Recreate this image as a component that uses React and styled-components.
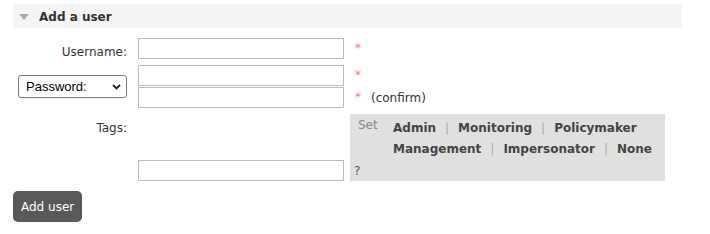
import React from "react";
import styled, { createGlobalStyle } from "styled-components";

const Global = createGlobalStyle`
  html, body { margin: 0; padding: 0; background: #fff; }
  body { font-family: "DejaVu Sans", Verdana, sans-serif; font-size: 12px; color: #333; }
  * { box-sizing: border-box; }
`;

const Page = styled.div`
  padding: 4px 28px 0 13px;
  width: 710px;
`;

const SectionHeader = styled.div`
  display: flex;
  align-items: center;
  height: 24px;
  background: #f5f5f5;
  padding: 1px 0 0 6px;
  font-weight: bold;
  color: #333;
  line-height: 14px;
`;

const Toggle = styled.svg`
  width: 10px;
  height: 6px;
  margin-right: 10px;
  display: block;
`;

const FormGrid = styled.div`
  display: grid;
  grid-template-columns: 125px 1fr;
  row-gap: 6px;
  margin-top: 10px;
`;

const Label = styled.div`
  text-align: right;
  padding-right: 11px;
  padding-top: ${(p) => p.$top || 0}px;
  line-height: 14px;
  color: #333;
`;

const LabelCell = styled.div`
  display: flex;
  align-items: center;
  justify-content: flex-end;
  padding-right: 11px;
`;

const Fields = styled.div`
  display: flex;
  flex-direction: column;
  gap: 1px;
`;

const FieldRow = styled.div`
  display: flex;
  align-items: ${(p) => (p.$bottom ? "flex-end" : "center")};
`;

const TextInput = styled.input`
  width: 206px;
  height: 21px;
  border: 1px solid #bbb;
  border-radius: 0;
  padding: 0 4px;
  font-family: inherit;
  font-size: 12px;
  background: #fff;
  outline: none;
  margin: 0;
`;

const Mandatory = styled.span`
  margin-left: 11px;
  margin-top: -2px;
  color: #f77;
  line-height: 14px;
`;

const Note = styled.span`
  margin-left: 10px;
  line-height: 14px;
  color: #333;
`;

const SelectWrap = styled.div`
  position: relative;
  width: 109px;
  height: 23px;
`;

const Select = styled.select`
  appearance: none;
  -webkit-appearance: none;
  width: 100%;
  height: 100%;
  border: 1px solid #767676;
  border-radius: 3px;
  background: #fff;
  padding: 0 0 0 7px;
  font-family: "Liberation Sans", Arial, sans-serif;
  font-size: 13px;
  color: #000;
  margin: 0;
`;

const Chevron = styled.svg`
  position: absolute;
  right: 6px;
  top: 9px;
  width: 9px;
  height: 6px;
  pointer-events: none;
`;

const TagBox = styled.div`
  margin-left: 6px;
  width: 315px;
  background: #e0e0e0;
  padding: 4px 4px 3px 4px;
`;

const TagTop = styled.div`
  display: flex;
  align-items: flex-start;
`;

const SetLabel = styled.span`
  width: 35px;
  margin-left: 4px;
  line-height: 14px;
  color: #888;
`;

const LinkLines = styled.div`
  display: flex;
  flex-direction: column;
`;

const LinkLine = styled.div`
  display: flex;
  line-height: 21px;
  white-space: nowrap;
`;

const TagLink = styled.span`
  font-weight: bold;
  color: #444;
  cursor: pointer;
`;

const Sep = styled.span`
  color: #aaa;
  margin: 0 7px;
  padding: 0 2px;
`;

const Help = styled.div`
  margin-top: 4px;
  line-height: 14px;
  color: #555;
`;

const Button = styled.button`
  margin-top: 10px;
  height: 31px;
  padding: 0 8px;
  border: none;
  border-radius: 5px;
  background: #595959;
  color: #fff;
  font-family: inherit;
  font-size: 12px;
  line-height: 14px;
  cursor: pointer;
`;

const rows = [
  [
    ["Admin", "administrator"],
    ["Monitoring", "monitoring"],
    ["Policymaker", "policymaker"],
  ],
  [
    ["Management", "management"],
    ["Impersonator", "impersonator"],
    ["None", ""],
  ],
];

export default function App() {
  return (
    <Page>
      <Global />
      <SectionHeader>
        <Toggle viewBox="0 0 10 6">
          <polygon points="0,0 10,0 5,6" fill="#aaa" />
        </Toggle>
        Add a user
      </SectionHeader>
      <FormGrid>
        <Label $top={7}>Username:</Label>
        <Fields>
          <FieldRow>
            <TextInput type="text" />
            <Mandatory>*</Mandatory>
          </FieldRow>
        </Fields>

        <LabelCell>
          <SelectWrap>
            <Select defaultValue="password">
              <option value="password">Password:</option>
              <option value="hash">Password hash:</option>
            </Select>
            <Chevron viewBox="0 0 9 6">
              <polyline points="1,1 4.5,4.5 8,1" fill="none" stroke="#222" strokeWidth="1.8" />
            </Chevron>
          </SelectWrap>
        </LabelCell>
        <Fields>
          <FieldRow>
            <TextInput type="password" />
            <Mandatory>*</Mandatory>
          </FieldRow>
          <FieldRow>
            <TextInput type="password" />
            <Mandatory>*</Mandatory>
            <Note>(confirm)</Note>
          </FieldRow>
        </Fields>

        <Label $top={7}>Tags:</Label>
        <Fields>
          <FieldRow $bottom>
            <TextInput type="text" />
            <TagBox>
              <TagTop>
                <SetLabel>Set</SetLabel>
                <LinkLines>
                  {rows.map((line, i) => (
                    <LinkLine key={i}>
                      {line.map(([name], j) => (
                        <React.Fragment key={name}>
                          {j > 0 && <Sep>|</Sep>}
                          <TagLink>{name}</TagLink>
                        </React.Fragment>
                      ))}
                    </LinkLine>
                  ))}
                </LinkLines>
              </TagTop>
              <Help>?</Help>
            </TagBox>
          </FieldRow>
        </Fields>
      </FormGrid>
      <Button>Add user</Button>
    </Page>
  );
}
